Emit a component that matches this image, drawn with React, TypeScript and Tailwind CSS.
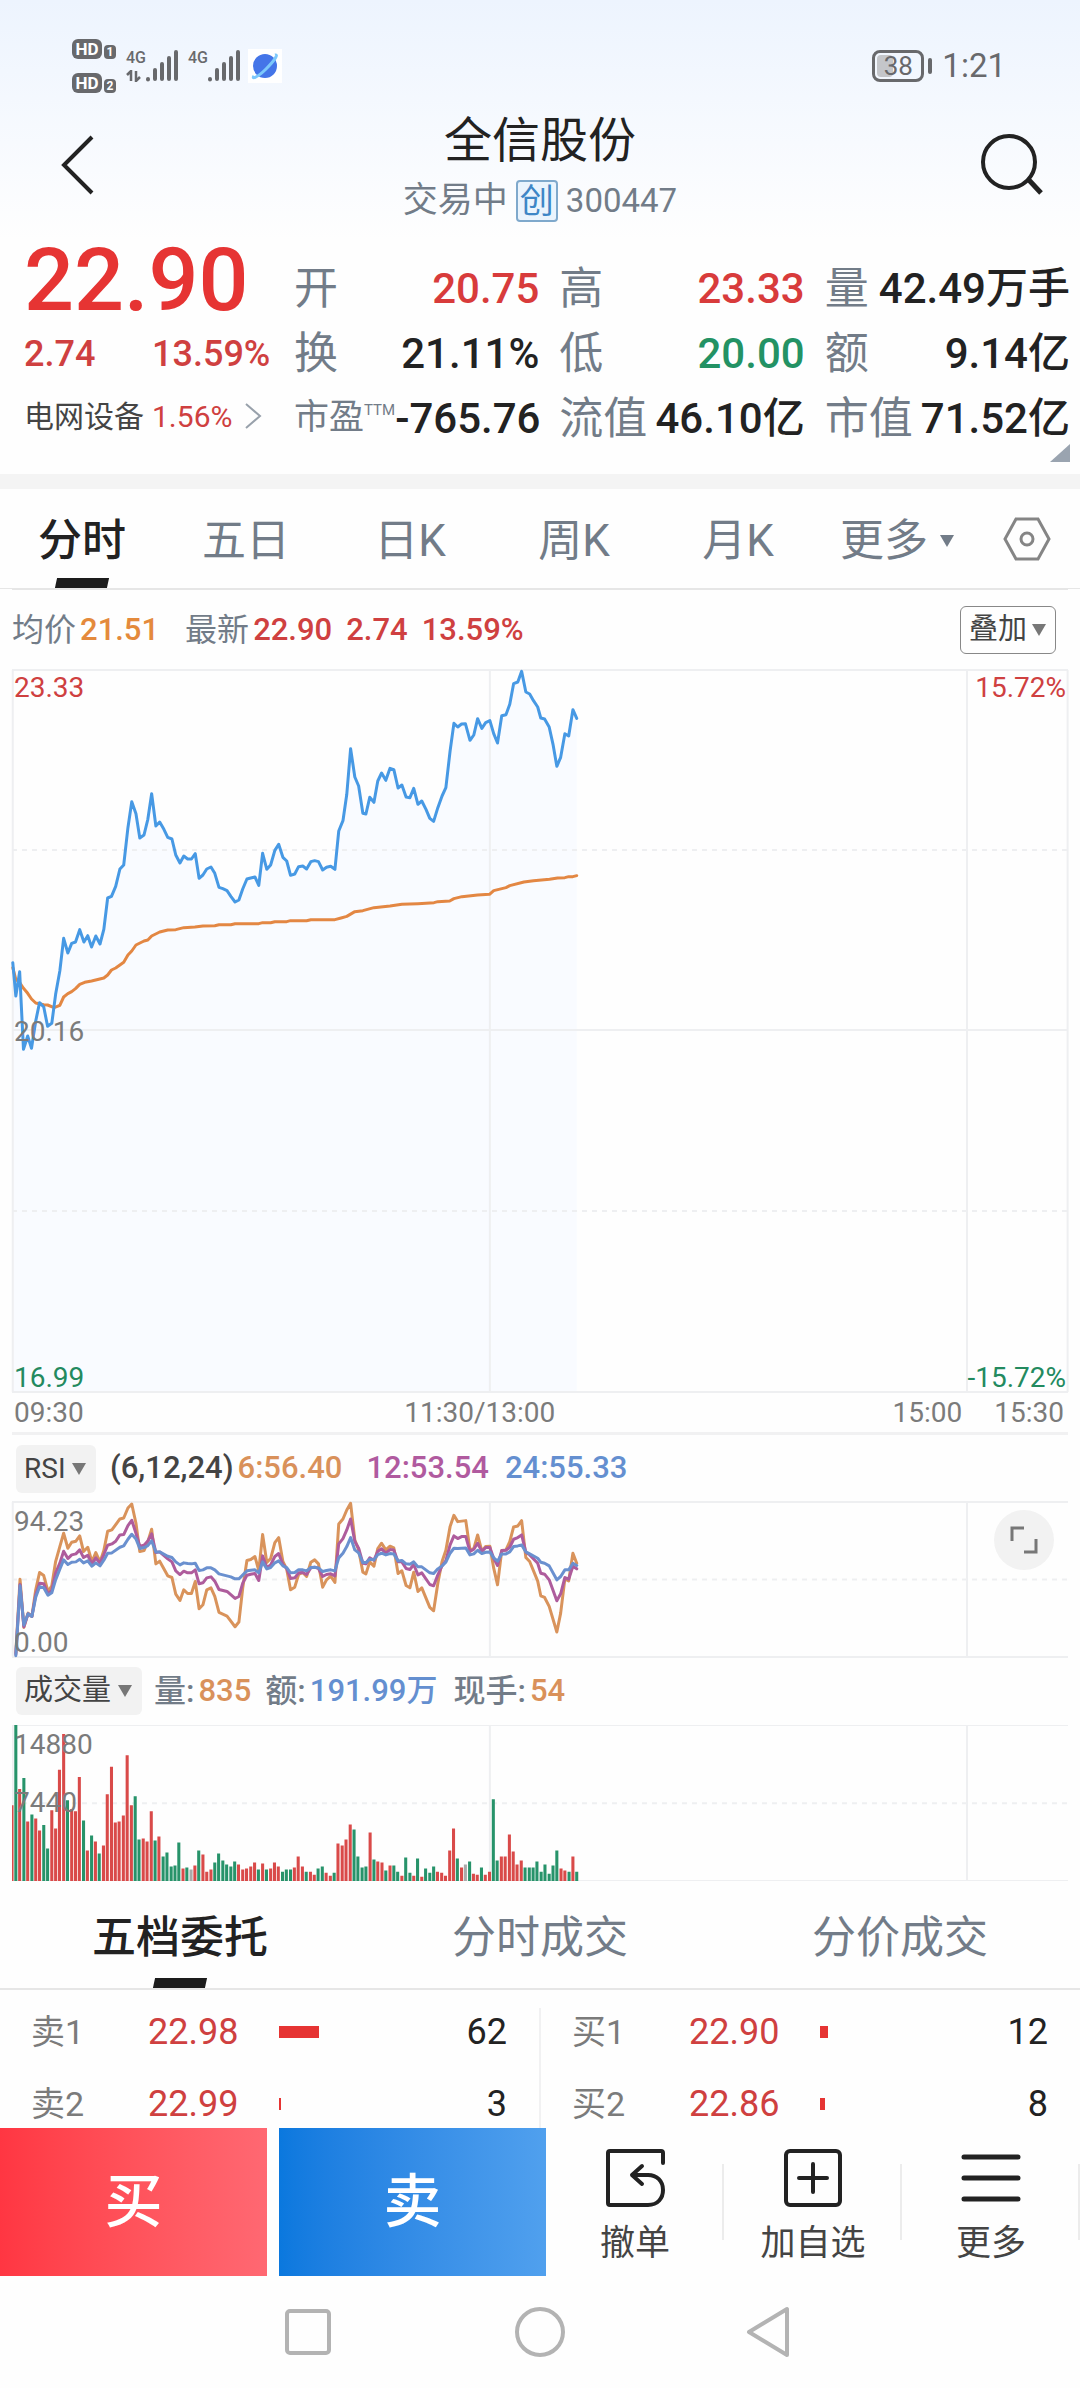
import { useState } from "react"
import clsx from "clsx"

const quotes = [
  { label: "开", value: "20.75", tone: "up" },
  { label: "高", value: "23.33", tone: "up" },
  { label: "量", value: "42.49万手", tone: "flat" },
  { label: "换", value: "21.11%", tone: "flat" },
  { label: "低", value: "20.00", tone: "down" },
  { label: "额", value: "9.14亿", tone: "flat" },
  { label: "市盈", value: "-765.76", tone: "flat", ttm: true },
  { label: "流值", value: "46.10亿", tone: "flat" },
  { label: "市值", value: "71.52亿", tone: "flat" },
]

const periods = ["分时", "五日", "日K", "周K", "月K"]
const detailTabs = ["五档委托", "分时成交", "分价成交"]

const asks = [
  { label: "卖1", price: "22.98", qty: 62 },
  { label: "卖2", price: "22.99", qty: 3 },
]
const bids = [
  { label: "买1", price: "22.90", qty: 12 },
  { label: "买2", price: "22.86", qty: 8 },
]

// polyline points share one x scale: 32 is 09:30, 1280 is 11:30
const priceLine =
  "34,935 42,1035 52,962 62,1195 73,1155 83,1192 94,1110 104,1055 115,1068 125,1126 136,1117 146,1030 157,960 167,862 178,906 188,877 198,873 209,836 220,873 230,854 240,888 251,855 262,879 272,835 282,741 292,736 303,706 314,654 324,642 335,530 345,452 356,488 366,561 377,552 387,505 397,428 408,525 418,513 429,535 439,559 450,564 460,612 471,636 481,615 491,624 501,624 511,608 521,682 531,672 541,654 552,648 562,667 573,709 583,713 594,719 604,736 615,753 625,747 635,714 646,684 656,681 667,678 677,703 687,607 698,655 708,642 719,598 729,580 740,619 750,630 760,673 771,669 781,647 792,645 802,654 813,632 823,629 833,632 844,657 854,649 865,646 876,655 886,540 897,509 907,430 917,293 928,378 938,405 949,487 957,489 967,439 978,454 988,390 998,366 1009,388 1020,352 1030,356 1041,411 1051,402 1062,438 1072,440 1082,412 1093,460 1103,450 1114,475 1124,502 1134,511 1145,470 1156,435 1166,410 1177,300 1187,217 1197,228 1207,219 1217,218 1229,268 1239,252 1249,203 1260,232 1270,215 1281,209 1291,248 1301,276 1312,194 1323,191 1333,160 1343,98 1354,93 1364,61 1375,123 1385,129 1395,149 1406,168 1414,201 1424,204 1436,228 1446,280 1456,346 1466,319 1477,248 1487,255 1498,176 1508,202"

const averageLine =
  "34,950 42,985 52,995 62,1012 73,1027 83,1044 94,1056 115,1061 125,1062 142,1070 157,1063 167,1038 178,1028 188,1022 198,1013 209,1000 222,994 240,990 272,981 282,972 292,957 303,951 324,934 335,912 345,900 356,882 377,870 387,867 397,855 418,843 439,837 460,836 481,830 510,828 531,825 562,824 573,821 604,821 615,818 677,818 687,815 708,815 719,812 750,812 760,809 802,809 813,806 876,806 892,801 907,796 928,782 949,779 978,770 1020,765 1051,760 1093,758 1135,755 1145,752 1176,750 1187,743 1208,737 1249,732 1280,730 1291,719 1323,710 1333,704 1370,693 1395,689 1437,685 1458,681 1477,680 1487,677 1498,677 1508,674"

const rsi6 =
  "42,520 53,298 63,443 74,400 84,410 94,330 104,278 115,287 126,335 136,318 146,245 157,200 167,160 178,205 188,187 199,184 209,168 219,215 230,202 241,246 251,218 262,246 272,212 282,154 293,150 314,117 324,114 335,84 345,72 356,130 366,215 377,212 387,185 397,148 408,252 418,244 439,288 450,293 460,343 471,362 481,330 491,341 501,341 511,305 521,387 531,375 541,330 552,324 562,350 573,398 594,409 615,441 625,427 635,325 646,242 656,239 667,230 677,272 687,164 698,248 708,236 719,188 729,173 740,245 750,268 760,330 771,322 781,284 792,278 802,290 813,247 823,240 833,252 844,322 854,300 865,289 876,308 886,132 897,117 907,90 917,70 928,180 938,210 949,277 957,282 967,246 978,259 988,206 998,190 1009,210 1020,199 1030,204 1041,281 1051,273 1062,317 1072,324 1082,277 1093,335 1103,324 1124,383 1134,393 1145,310 1156,245 1166,211 1177,140 1187,106 1197,125 1218,122 1229,210 1239,206 1249,165 1260,214 1270,200 1281,199 1291,265 1301,315 1312,212 1323,210 1333,185 1343,141 1354,138 1364,122 1375,233 1385,245 1406,304 1414,348 1424,353 1436,380 1456,457 1466,400 1477,297 1487,303 1498,220 1508,250"

const rsi12 =
  "42,524 53,314 63,441 74,402 84,410 94,345 104,310 115,312 126,342 136,332 146,280 157,250 167,214 178,236 188,225 199,222 209,210 219,233 230,226 241,252 251,234 262,250 272,224 282,196 293,192 303,184 314,165 324,164 335,137 345,121 356,160 366,199 377,196 387,183 397,162 408,218 418,216 439,237 450,246 460,273 471,284 481,274 491,279 501,279 511,270 521,312 531,309 541,294 552,291 562,304 573,329 594,335 615,356 625,350 635,310 646,286 656,283 667,281 677,302 687,228 698,263 708,255 719,230 729,221 740,254 750,266 760,296 771,294 781,279 792,278 802,284 813,264 823,262 833,266 844,290 854,284 865,282 876,288 886,192 897,176 907,150 917,117 928,185 938,205 949,250 957,252 967,234 978,241 988,214 998,207 1009,220 1020,209 1030,210 1041,246 1051,246 1062,266 1072,269 1082,254 1093,285 1103,279 1124,314 1134,318 1145,285 1156,258 1166,242 1177,195 1187,168 1197,176 1207,170 1218,170 1229,215 1239,208 1249,190 1260,214 1270,203 1281,203 1291,235 1301,257 1312,212 1323,211 1333,202 1343,178 1354,173 1364,165 1375,217 1385,225 1406,250 1414,280 1424,283 1436,300 1456,363 1466,342 1477,293 1487,298 1498,259 1508,267"

const rsi24 =
  "42,528 53,318 63,436 74,402 84,410 94,352 104,321 115,324 126,346 136,339 146,300 157,268 167,240 178,254 188,247 199,246 209,238 219,249 230,243 241,259 251,249 262,258 272,241 282,220 293,219 314,202 324,198 335,178 345,163 356,177 366,206 377,203 387,197 397,183 408,216 418,216 439,229 450,233 460,246 471,255 481,249 491,251 501,252 511,250 521,272 531,270 541,264 552,264 562,270 573,282 604,291 615,297 625,297 646,273 656,271 667,270 677,279 687,246 698,267 708,263 719,249 729,243 740,258 750,263 760,279 771,278 781,270 792,270 802,273 813,263 823,262 833,264 844,275 854,272 865,270 876,273 886,234 897,220 907,200 917,173 928,210 938,219 949,248 957,248 967,238 978,240 988,224 998,220 1009,225 1020,221 1030,222 1041,243 1051,242 1062,252 1072,253 1082,246 1093,261 1103,261 1124,279 1134,281 1145,267 1156,258 1166,247 1177,220 1187,205 1197,206 1218,204 1229,225 1239,222 1249,211 1260,221 1270,217 1281,216 1291,234 1301,244 1312,222 1323,222 1333,216 1343,200 1354,198 1364,195 1375,216 1385,222 1406,235 1414,247 1424,250 1436,258 1456,300 1466,290 1477,270 1487,270 1498,250 1508,257"

// one bar a minute: r = up, g = down, n = unchanged
const volumes =
  "r226 g468 r275 g308 r178 g199 r187 r151 g167 g97 r211 r157 r332 r439 g241 r215 r208 r311 g181 r91 g136 r118 g82 r106 r259 r341 r175 r178 r196 r376 r226 g253 g124 r127 r118 r208 g121 r133 g73 g85 g43 g46 g115 r37 g40 n34 r46 g91 r79 r28 r34 g55 g82 g61 g49 g43 g58 r49 r34 r37 r43 r55 g34 r52 g34 r37 r55 r43 g28 g34 g34 r40 r73 r43 g28 r28 r19 g37 g43 r25 r16 g25 r112 r106 r124 r169 g154 g73 g40 g43 r145 g64 r58 r55 g31 r46 g46 g28 r16 g70 g25 r16 g67 r13 g37 g25 g43 r28 r25 r16 r91 r157 g67 r40 n49 g58 r22 r19 g40 r19 r28 g244 g61 r73 r73 r139 r88 r49 r61 g40 g40 g40 g58 g28 g49 g22 g46 g91 r37 r31 g28 r73 g28".split(" ")

function barPath(kind: string) {
  return volumes
    .map((v, i) => (v[0] === kind ? `M${Math.round(31.5 + i * 10.4)} 661V${661 - Number(v.slice(1))}` : ""))
    .join("")
}

function Caret({ className }: { className?: string }) {
  return (
    <svg viewBox="0 0 14 12" className={clsx("w-3.5 h-3 fill-current", className)} aria-hidden="true">
      <path d="M0 0H14L7 12Z" />
    </svg>
  )
}

function Grid({ top, height }: { top: number; height: number }) {
  return (
    <g stroke="#eeeff1" strokeWidth="2" fill="none">
      <path vectorEffect="non-scaling-stroke" d={`M32 ${top}H2792M32 ${top + height}H2792`} />
      <path vectorEffect="non-scaling-stroke" d={`M34 ${top}V${top + height}M1281 ${top}V${top + height}M2528 ${top}V${top + height}`} />
    </g>
  )
}

function Dashed({ y }: { y: number }) {
  return <path vectorEffect="non-scaling-stroke" d={`M32 ${y}H2792`} stroke="#eeeff1" strokeWidth="2" strokeDasharray="5 5" fill="none" />
}

function Line({ points, color }: { points: string; color: string }) {
  return <polyline points={points} fill="none" stroke={color} strokeWidth="3" strokeLinejoin="round" strokeLinecap="round" vectorEffect="non-scaling-stroke" />
}

function Signal() {
  return (
    <svg viewBox="0 0 32 32" className="w-8 h-8" stroke="#68696c" strokeWidth="4" strokeLinecap="round" aria-hidden="true">
      <path d="M2 29V29.5M9 20V29M16 14V29M23 8V29M30 2V29" />
    </svg>
  )
}

function StatusBar() {
  return (
    <div className="flex h-28 items-center justify-between pt-5 pl-[72px] pr-[74px] text-[#68696c]">
      <div className="flex items-center">
        <div className="flex flex-col gap-3.5">
          {[1, 2].map((n) => (
            <div key={n} className="flex items-end gap-0.5">
              <span className="flex h-5 w-7.5 items-center justify-center rounded-md bg-[#68696c] text-[17px] leading-5 font-bold text-white">HD</span>
              <span className="flex h-3.5 w-3 items-center justify-center rounded-sm bg-[#68696c] text-[12px] leading-3.5 font-bold text-white">{n}</span>
            </div>
          ))}
        </div>
        <div className="ml-2.5 flex h-8 flex-col justify-between">
          <span className="text-[16px] leading-4 font-medium">4G</span>
          <svg viewBox="0 0 18 12" className="h-3 w-4.5" fill="none" stroke="#68696c" strokeWidth="2.5" aria-hidden="true">
            <path d="M1 5L5 1V11M10 1V11L14 7" />
          </svg>
        </div>
        <Signal />
        <span className="ml-2.5 h-8 text-[16px] leading-4 font-medium">4G</span>
        <Signal />
        <svg viewBox="0 0 34 34" className="ml-2 size-[34px]" aria-hidden="true">
          <rect width="34" height="34" fill="#fff" />
          <circle cx="17" cy="17" r="12" fill="#4475e8" />
          <path d="M6 27C3 31 10 28 18 20C26 12 31 5 27 6" fill="none" stroke="#7cc8fb" strokeWidth="3" />
        </svg>
      </div>
      <div className="flex items-center">
        <span className="relative flex h-8 w-[52px] items-center justify-center rounded-lg border-3 border-[#68696c]">
          <span className="absolute inset-y-0.5 left-0.5 w-4 rounded-sm bg-[#c4c6ca]" />
          <span className="relative text-[26px] leading-7">38</span>
        </span>
        <span className="ml-1 h-4 w-1 rounded-sm bg-[#68696c]" />
        <span className="ml-2.5 text-[33px] leading-9">1:21</span>
      </div>
    </div>
  )
}

function TitleBar() {
  return (
    <header className="flex h-32 items-start justify-between px-6">
      <button aria-label="返回" className="flex h-[106px] w-24 items-center pl-9">
        <svg viewBox="0 0 34 60" className="h-15 w-[34px]" fill="none" stroke="#222" strokeWidth="4" aria-hidden="true">
          <path d="M32 2L4 30L32 58" />
        </svg>
      </button>
      <div className="flex flex-col items-center">
        <h1 className="text-[48px] leading-[58px] text-[#222]">全信股份</h1>
        <p className="mt-2.5 flex items-center gap-2 text-[35px] leading-[42px] text-[#727c88]">
          交易中
          <span className="flex size-[42px] items-center justify-center rounded-sm border-2 border-[#7fa9cc] bg-[#eaf4fd] text-[34px] leading-9 text-[#3d86c6]">创</span>
          <span className="text-[33px]">300447</span>
        </p>
      </div>
      <button aria-label="搜索" className="flex h-[106px] w-24 items-center justify-end pr-3">
        <svg viewBox="0 0 64 64" className="size-16" fill="none" stroke="#222" strokeWidth="4" aria-hidden="true">
          <circle cx="29" cy="29" r="26" />
          <path d="M48 46L61 60" strokeWidth="5" />
        </svg>
      </button>
    </header>
  )
}

function QuotePanel() {
  return (
    <section className="relative flex h-[234px] pl-6 pr-2.5">
      <div className="w-[270px] shrink-0 text-[#cf4040]">
        <p className="text-[88px] leading-20 font-medium text-[#e63433]">22.90</p>
        <p className="flex h-[68px] items-center text-[36px] font-medium">
          <span className="w-32">2.74</span>
          <span>13.59%</span>
        </p>
        <a href="#sector" className="flex h-14 items-center text-[30px]">
          <span className="w-32 text-[#444]">电网设备</span>
          <span>1.56%</span>
          <svg viewBox="0 0 18 26" className="ml-3 h-6.5 w-4.5" fill="none" stroke="#98a1ab" strokeWidth="2" aria-hidden="true">
            <path d="M2 1L16 13L2 25" />
          </svg>
        </a>
      </div>
      <dl className="mt-4 grid flex-1 auto-rows-[65px] grid-cols-3 gap-x-5">
        {quotes.map((q) => (
          <div key={q.label} className="flex items-center justify-between whitespace-nowrap">
            <dt className={clsx("flex text-[#727c88]", q.ttm ? "text-[35px]" : "text-[44px]")}>
              {q.label}
              {q.ttm && <sup className="top-0 pt-2 text-[15px] leading-5">TTM</sup>}
            </dt>
            <dd
              className={clsx(
                "text-[42px] font-medium",
                q.tone === "up" && "text-[#d83b3b]",
                q.tone === "down" && "text-[#239264]",
                q.tone === "flat" && "text-[#222]"
              )}
            >
              {q.value}
            </dd>
          </div>
        ))}
      </dl>
      <button aria-label="展开" className="absolute right-2.5 bottom-3">
        <svg viewBox="0 0 20 18" className="h-4.5 w-5" fill="#9aa4b0" aria-hidden="true">
          <path d="M20 0V18H0Z" />
        </svg>
      </button>
    </section>
  )
}

function PeriodTabs() {
  const [active, setActive] = useState("分时")
  return (
    <nav className="flex h-[100px] border-b border-[#e6e6e6] text-[44px] text-[#727c88]">
      {periods.map((p) => (
        <button key={p} onClick={() => setActive(p)} className={clsx("relative flex-[164] pt-1", p === active && "font-medium text-[#222]")}>
          {p}
          {p === active && <span className="absolute bottom-0 left-1/2 h-2.5 w-13 -translate-x-1/2 -skew-x-12 bg-[#1c1c1c]" />}
        </button>
      ))}
      <button className="flex flex-[154] items-center justify-center gap-3 pt-1">
        更多
        <Caret />
      </button>
      <button aria-label="设置" className="flex flex-[106] items-center justify-center">
        <svg viewBox="0 0 48 44" className="h-11 w-12" fill="none" stroke="#858585" strokeWidth="3" aria-hidden="true">
          <path d="M13 2H35L46 22L35 42H13L2 22Z" />
          <circle cx="24" cy="22" r="6" />
        </svg>
      </button>
    </nav>
  )
}

function PriceChart() {
  return (
    <section className="mx-3 border-t border-[#e6e6e6]">
      <div className="flex h-20 items-center text-[31px] font-medium text-[#cf4040]">
        <span className="text-[32px] font-normal text-[#727c88]">均价</span>
        <span className="ml-1 text-[#e48a3c]">21.51</span>
        <span className="ml-6.5 text-[32px] font-normal text-[#727c88]">最新</span>
        <span className="ml-1">22.90</span>
        <span className="ml-3.5">2.74</span>
        <span className="ml-3.5">13.59%</span>
        <label className="relative mr-3 ml-auto h-12 w-24">
          <select aria-label="叠加" className="size-full appearance-none rounded-md border border-[#888] pl-2 text-[29px] font-normal text-[#444]">
            <option>叠加</option>
          </select>
          <Caret className="pointer-events-none absolute top-4.5 right-2.5 text-[#777]" />
        </label>
      </div>
      <div className="relative text-[28px] leading-7 text-[#7b7b7b]">
        <svg viewBox="32 57 2760 2166" preserveAspectRatio="none" className="block h-[722px] w-full overflow-visible" aria-label="分时走势">
          <polygon points={`34,2223 ${priceLine} 1508,2223`} fill="#f9fbff" />
          <Grid top={57} height={2166} />
          <path vectorEffect="non-scaling-stroke" d="M32 1137H2792M2791 57V2223" stroke="#eeeff1" strokeWidth="2" />
          <Dashed y={597} />
          <Dashed y={1680} />
          <Line points={averageLine} color="#e38743" />
          <Line points={priceLine} color="#4799e4" />
        </svg>
        <span className="absolute top-1 left-0.5 text-[#cf4040]">23.33</span>
        <span className="absolute top-1 right-0.5 text-[#cf4040]">15.72%</span>
        <span className="absolute top-[348px] left-0.5">20.16</span>
        <span className="absolute bottom-0 left-0.5 text-[#238a5f]">16.99</span>
        <span className="absolute right-0.5 bottom-0 text-[#238a5f]">-15.72%</span>
      </div>
      <div className="grid h-[43px] grid-cols-[391fr_163fr_396fr_102fr] items-center border-b-3 border-[#f1f1f2] pr-1 pl-0.5 text-[28px] text-[#7b7b7b]">
        <span>09:30</span>
        <span className="whitespace-nowrap">11:30/13:00</span>
        <span className="text-right">15:00</span>
        <span className="text-right">15:30</span>
      </div>
    </section>
  )
}

function RsiChart() {
  return (
    <section className="mx-3">
      <div className="flex h-[67px] items-center pl-1 text-[31px] font-medium text-[#444]">
        <label className="relative h-12 w-20">
          <select aria-label="指标" className="size-full appearance-none rounded-md bg-[#f2f2f2] pl-2 text-[28px] font-normal">
            <option>RSI</option>
          </select>
          <Caret className="pointer-events-none absolute top-4.5 right-2.5 text-[#777]" />
        </label>
        <span className="ml-3.5">(6,12,24)</span>
        <span className="ml-1 text-[#d9915a]">6:56.40</span>
        <span className="ml-6 text-[#b05a9f]">12:53.54</span>
        <span className="ml-4 text-[#648fd0]">24:55.33</span>
      </div>
      <div className="relative text-[28px] leading-7 text-[#7b7b7b]">
        <svg viewBox="32 66 2760 466" preserveAspectRatio="none" className="block h-[155px] w-full overflow-visible" aria-label="RSI">
          <Grid top={66} height={466} />
          <Dashed y={299} />
          <Line points={rsi6} color="#d9935b" />
          <Line points={rsi12} color="#ae5c9c" />
          <Line points={rsi24} color="#6a90cf" />
        </svg>
        <span className="absolute top-1.5 left-0.5">94.23</span>
        <span className="absolute bottom-0 left-0.5">0.00</span>
        <button aria-label="全屏" className="absolute top-2 right-3.5 flex size-15 items-center justify-center rounded-full bg-[#f2f2f2]">
          <svg viewBox="0 0 28 28" className="size-7" fill="none" stroke="#777" strokeWidth="3" aria-hidden="true">
            <path d="M2 15V2H14M26 13V26H14" />
          </svg>
        </button>
      </div>
    </section>
  )
}

function VolumeChart() {
  return (
    <section className="mx-3">
      <div className="flex h-[68px] items-center pl-1 text-[31px] font-medium text-[#d9915a]">
        <label className="relative h-12 w-[126px]">
          <select aria-label="指标" className="size-full appearance-none rounded-md bg-[#f2f2f2] pl-2 text-[29px] font-normal text-[#444]">
            <option>成交量</option>
          </select>
          <Caret className="pointer-events-none absolute top-4.5 right-2.5 text-[#777]" />
        </label>
        <span className="ml-3 text-[32px] text-[#727c88]">量:</span>
        <span className="ml-1">835</span>
        <span className="ml-3.5 text-[32px] text-[#727c88]">额:</span>
        <span className="ml-1 text-[#648fd0]">191.99万</span>
        <span className="ml-4 text-[32px] text-[#727c88]">现手:</span>
        <span className="ml-1">54</span>
      </div>
      <div className="relative text-[28px] leading-7 text-[#7b7b7b]">
        <svg viewBox="32 195 2760 466" preserveAspectRatio="none" className="block h-[156px] w-full" aria-label="成交量">
          <Grid top={195} height={466} />
          <Dashed y={429} />
          <g strokeWidth="8">
            <path d={barPath("r")} stroke="#d94a49" />
            <path d={barPath("g")} stroke="#27936a" />
            <path d={barPath("n")} stroke="#aaa" />
          </g>
        </svg>
        <span className="absolute top-1.5 left-0.5">14880</span>
        <span className="absolute top-16 left-0.5">7440</span>
      </div>
    </section>
  )
}

function DetailTabs() {
  const [active, setActive] = useState("五档委托")
  return (
    <nav className="grid h-[109px] grid-cols-3 border-b-2 border-[#e6e6e6] text-[44px] text-[#727c88]">
      {detailTabs.map((t) => (
        <button key={t} onClick={() => setActive(t)} className={clsx("relative pt-1.5", t === active && "font-medium text-[#222]")}>
          {t}
          {t === active && <span className="absolute bottom-0 left-1/2 h-2.5 w-13 -translate-x-1/2 -skew-x-12 bg-[#1c1c1c]" />}
        </button>
      ))}
    </nav>
  )
}

function OrderTable({ rows }: { rows: typeof asks }) {
  return (
    <table className="w-full table-fixed text-[36px] leading-9">
      <tbody>
        {rows.map((r) => (
          <tr key={r.label} className="h-18">
            <th scope="row" className="w-[148px] pl-[31px] text-left text-[34px] font-normal text-[#7b7b7b]">{r.label}</th>
            <td className="w-[131px] text-[#cf4040]">{r.price}</td>
            <td>
              <div className="h-3 bg-[#e63433]" style={{ width: Math.round(r.qty * 0.65) }} />
            </td>
            <td className="w-20 pr-8 text-right text-[#222]">{r.qty}</td>
          </tr>
        ))}
      </tbody>
    </table>
  )
}

function ActionBar() {
  return (
    <footer className="flex h-[148px] text-[35px] leading-10 text-[#444]">
      <button className="mr-3 flex-[267] bg-linear-to-r from-[#ff3642] to-[#ff6872] text-[58px] font-medium text-white">买</button>
      <button className="flex-[267] bg-linear-to-r from-[#0a78de] to-[#50a0ee] text-[58px] font-medium text-white">卖</button>
      <div className="grid flex-[534] grid-cols-3">
        <button className="relative flex flex-col items-center gap-4 pt-5">
          <svg viewBox="0 0 60 60" className="size-15" fill="none" stroke="#222" strokeWidth="4" strokeLinejoin="round" strokeLinecap="round" aria-hidden="true">
            <path d="M58 15V5Q58 3 56 3H5Q3 3 3 5V55Q3 57 5 57H43C53 57 58 50 58 42C58 33 52 27 43 27H27M37 18L27 27L37 36" />
          </svg>
          撤单
          <span className="absolute top-9 right-0 h-19 w-0.5 bg-[#ececec]" />
        </button>
        <button className="relative flex flex-col items-center gap-4 pt-5">
          <svg viewBox="0 0 60 60" className="size-15" fill="none" stroke="#222" strokeWidth="4" strokeLinecap="round" aria-hidden="true">
            <rect x="3" y="3" width="54" height="54" rx="4" />
            <path d="M30 16V44M16 30H44" />
          </svg>
          加自选
          <span className="absolute top-9 right-0 h-19 w-0.5 bg-[#ececec]" />
        </button>
        <button className="relative flex flex-col items-center gap-4 pt-5">
          <svg viewBox="0 0 60 60" className="size-15" fill="none" stroke="#222" strokeWidth="5" strokeLinecap="round" aria-hidden="true">
            <path d="M3 9H57M3 30H57M3 51H57" />
          </svg>
          更多
          <span className="absolute top-9 right-0 h-19 w-0.5 bg-[#ececec]" />
        </button>
      </div>
    </footer>
  )
}

function SystemNav() {
  return (
    <div className="flex h-28 items-center justify-center gap-[180px]">
      <button aria-label="最近任务">
        <svg viewBox="0 0 52 52" className="size-13" fill="none" stroke="#b3b3b3" strokeWidth="4" aria-hidden="true">
          <rect x="5" y="5" width="42" height="42" rx="3" />
        </svg>
      </button>
      <button aria-label="主屏幕">
        <svg viewBox="0 0 52 52" className="size-13" fill="none" stroke="#b3b3b3" strokeWidth="4" aria-hidden="true">
          <circle cx="26" cy="26" r="23" />
        </svg>
      </button>
      <button aria-label="系统返回">
        <svg viewBox="0 0 52 52" className="size-13" fill="none" stroke="#b3b3b3" strokeWidth="4" strokeLinejoin="round" aria-hidden="true">
          <path d="M41 3V49L3 26Z" />
        </svg>
      </button>
    </div>
  )
}

export default function App() {
  return (
    <div className="flex min-h-screen flex-col bg-[#fefefe] font-[Roboto,'Noto_Sans_CJK_SC',sans-serif]">
      <div className="bg-linear-to-b from-[#edf4fe] to-[#fefefe]">
        <StatusBar />
        <TitleBar />
      </div>
      <QuotePanel />
      <div className="h-[15px] bg-[#f4f4f4]" />
      <PeriodTabs />
      <PriceChart />
      <RsiChart />
      <VolumeChart />
      <DetailTabs />
      <div className="flex h-[138px] overflow-hidden pt-1.5">
        <div className="flex-1">
          <OrderTable rows={asks} />
        </div>
        <div className="mt-3 w-0.5 bg-[#f1f1f2]" />
        <div className="flex-1">
          <OrderTable rows={bids} />
        </div>
      </div>
      <ActionBar />
      <SystemNav />
    </div>
  )
}
